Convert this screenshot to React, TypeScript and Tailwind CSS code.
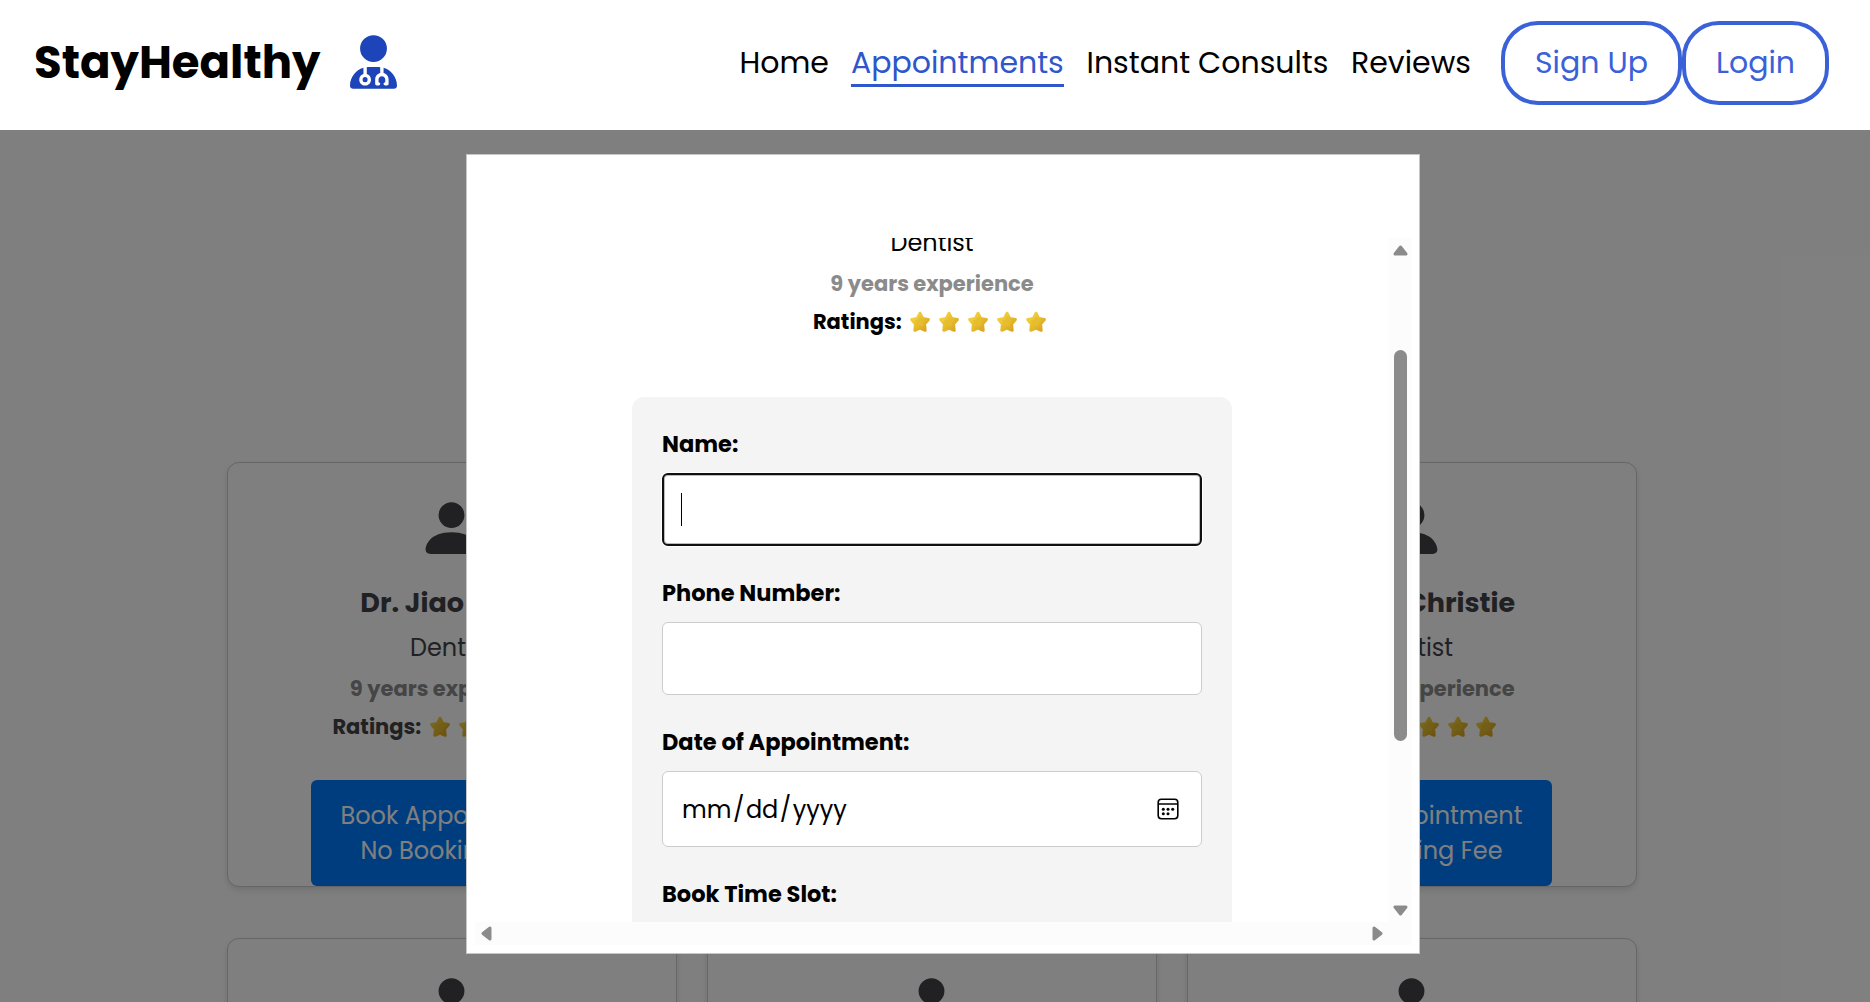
import type { ReactNode } from "react";
import { FaUserDoctor } from "react-icons/fa6";

function Star() {
  return (
    <svg viewBox="0 0 22 22" className="h-[22px] w-[22px]">
      <defs>
        <linearGradient id="gold" x1="0" y1="0" x2="1" y2="1">
          <stop offset="0" stopColor="#f9d949" />
          <stop offset="0.45" stopColor="#e8c02f" />
          <stop offset="1" stopColor="#d9a01f" />
        </linearGradient>
      </defs>
      <path
        d="M11 2.2 L13.6 7.4 L19.4 8.5 L15.6 12.9 L16.2 19.3 L11 17.2 L5.8 19.3 L6.4 12.9 L2.6 8.5 L8.4 7.4 Z"
        fill="url(#gold)"
        stroke="url(#gold)"
        strokeWidth="3"
        strokeLinejoin="round"
      />
      <path d="M11 6 L12.6 9 L16 9.6 L13.6 12.2 L14 15.6 L11 14.2 L8 15.6 L8.4 12.2 L6 9.6 L9.4 9 Z" fill="#e5bd2f" />
    </svg>
  );
}

function Person() {
  return (
    <svg viewBox="0 0 16 16" fill="currentColor" className="h-[70px] w-[69px] shrink-0">
      <path d="M3 14s-1 0-1-1 1-4 6-4 6 3 6 4-1 1-1 1zm5-6a3 3 0 1 0 0-6 3 3 0 0 0 0 6" />
    </svg>
  );
}

function DoctorDetails({ years, rating }: { years: number; rating: number }) {
  return (
    <>
      <p className="h-[34px] text-[24px] leading-[34px]">Dentist</p>
      <p className="mt-[9px] h-[30px] text-[21px] leading-[30px] font-bold text-[#8b8b8b]">{years} years experience</p>
      <div className="mt-2 flex h-[30px] items-center pr-[4.5px]">
        <span className="w-[96.5px] text-[21px] leading-[30px] font-bold">Ratings:</span>
        <div className="flex gap-[6.8px]">
          {Array.from({ length: rating }, (_, n) => (
            <Star key={n} />
          ))}
        </div>
      </div>
    </>
  );
}

type Doctor = { id: number; name?: string; years: number; rating: number };

function DoctorCard({ doctor }: { doctor: Doctor }) {
  return (
    <article className="flex h-[425px] w-[450px] flex-col items-center rounded-xl border border-[#ccc] bg-white pt-[30px] text-[#424247] shadow-[0_3px_6px_rgba(0,0,0,0.12)]">
      <Person />
      {doctor.name && (
        <>
          <h3 className="mt-5 mb-2 h-10 text-[27px] leading-10 font-bold">{doctor.name}</h3>
          <DoctorDetails years={doctor.years} rating={doctor.rating} />
          <button className="mt-[38px] h-[106px] w-[281px] shrink-0 rounded-md bg-[#007bff] text-[24px] leading-[35px] text-white">
            <span className="block">Book Appointment</span>
            <span className="block">No Booking Fee</span>
          </button>
        </>
      )}
    </article>
  );
}

function Label({ children }: { children: ReactNode }) {
  return <label className="mb-[14px] block h-[30px] text-[22.5px] leading-[30px] font-bold">{children}</label>;
}

function CalendarIcon() {
  return (
    <svg viewBox="0 0 22 22" className="h-[22px] w-[22px]">
      <rect x="1.2" y="1.2" width="19.6" height="19.6" rx="3.2" fill="none" stroke="#000" strokeWidth="1.6" />
      <path d="M1.5 6H20.5" stroke="#000" strokeWidth="1.5" />
      <g fill="#000">
        <circle cx="6.3" cy="11.2" r="1.5" />
        <circle cx="11" cy="11.2" r="1.5" />
        <circle cx="15.7" cy="11.2" r="1.5" />
        <circle cx="6.3" cy="15.7" r="1.5" />
        <circle cx="11" cy="15.7" r="1.5" />
      </g>
    </svg>
  );
}

function Arrow({ className }: { className: string }) {
  return (
    <svg viewBox="0 0 15 11" className={className}>
      <path d="M7.5 2 L13 9 H2 Z" fill="#8b8b8b" stroke="#8b8b8b" strokeWidth="3" strokeLinejoin="round" />
    </svg>
  );
}

function BookingModal() {
  return (
    <section className="absolute top-6 left-[466px] h-[800px] w-[954px] border border-[#c6c6c6] bg-white pt-[83px] pl-2">
      <div className="flex">
        <div className="flex h-[684px] w-[914px] flex-col items-center overflow-hidden">
          <div className="-mt-3 flex shrink-0 flex-col items-center">
            <DoctorDetails years={9} rating={5} />
          </div>
          <form className="mt-[60px] h-[600px] w-[600px] shrink-0 rounded-xl bg-[#f4f4f4] px-[30px] pt-8">
            <Label>Name:</Label>
            <div className="mb-8 flex h-[73px] items-center rounded-md border-2 border-[#101010] bg-white pl-[17px] shadow-[0_0_0_1px_#fff,inset_0_0_0_1px_#bbb]">
              <span className="h-[33px] w-px bg-black" />
            </div>
            <Label>Phone Number:</Label>
            <div className="mb-8 h-[73px] rounded-md border border-[#ccc] bg-white" />
            <Label>Date of Appointment:</Label>
            <div className="mb-8 flex h-[76px] items-center justify-between rounded-md border border-[#ccc] bg-white pr-[22px] pl-[17.5px]">
              <div className="flex items-center pt-px text-[24px] leading-[34px]">
                <span className="px-[1.5px]">mm</span>
                <span>/</span>
                <span className="px-[1.5px]">dd</span>
                <span>/</span>
                <span className="px-[1.5px]">yyyy</span>
              </div>
              <CalendarIcon />
            </div>
            <Label>Book Time Slot:</Label>
          </form>
        </div>
        <div className="flex w-[23px] flex-col items-center bg-[#fcfcfc] pt-[7px]">
          <Arrow className="mb-[94px] h-[11px] w-[15px]" />
          <span className="mb-[164px] h-[391px] w-[13px] rounded-full bg-[#8b8b8b]" />
          <Arrow className="h-[11px] w-[15px] rotate-180" />
        </div>
      </div>
      <div className="flex h-[23px] w-[937px] items-center justify-between bg-[#fcfcfc] pr-[27px] pl-1">
        <Arrow className="h-[11px] w-[15px] -rotate-90" />
        <Arrow className="h-[11px] w-[15px] rotate-90" />
      </div>
    </section>
  );
}

const doctors: Doctor[] = [
  { id: 1, name: "Dr. Jiao Yang", years: 9, rating: 5 },
  { id: 2, name: "Dr. Denis Raj", years: 24, rating: 4 },
  { id: 3, name: "Dr. Lyn Christie", years: 11, rating: 3 },
  { id: 4, years: 5, rating: 5 },
  { id: 5, years: 5, rating: 5 },
  { id: 6, years: 5, rating: 5 },
];

export default function App() {
  return (
    <div className="h-[1002px] w-full overflow-hidden bg-white font-['Poppins','Inter',sans-serif] whitespace-nowrap text-black">
      <header className="flex h-[130px] items-center justify-between pr-[41px] pb-1 pl-[34px] text-[30px] leading-[47px]">
        <div className="flex items-center">
          <h1 className="mb-0.5 w-[316px] text-[45px] font-bold">StayHealthy</h1>
          <FaUserDoctor className="mb-0.5 h-[54px] w-[47px] text-[#1d44b8]" />
        </div>
        <nav className="flex items-center">
          <a className="mr-[21.5px] mb-0.5 w-[90px]">Home</a>
          <a className="mr-[22.5px] h-12 w-[213px] border-b-3 border-[#2f56cb] leading-[48px] text-[#2f56cb]">Appointments</a>
          <a className="mr-[21.5px] mb-0.5 w-[243px]">Instant Consults</a>
          <a className="mr-[30px] mb-0.5 w-[120px]">Reviews</a>
          <button className="h-[84px] w-[181px] rounded-[37px] border-4 border-[#3b61d9] pb-0.5 text-[#3b61d9]">Sign Up</button>
          <button className="h-[84px] w-[147px] rounded-[37px] border-4 border-[#3b61d9] pb-0.5 text-[#3b61d9]">Login</button>
        </nav>
      </header>
      <main className="relative h-[872px] overflow-hidden">
        <div className="grid grid-cols-[repeat(3,450px)] gap-x-[30px] gap-y-[51px] pt-[332px] pl-[226.5px]">
          {doctors.map((d) => (
            <DoctorCard key={d.id} doctor={d} />
          ))}
        </div>
        <div className="absolute inset-0 bg-black/50" />
        <BookingModal />
      </main>
    </div>
  );
}
